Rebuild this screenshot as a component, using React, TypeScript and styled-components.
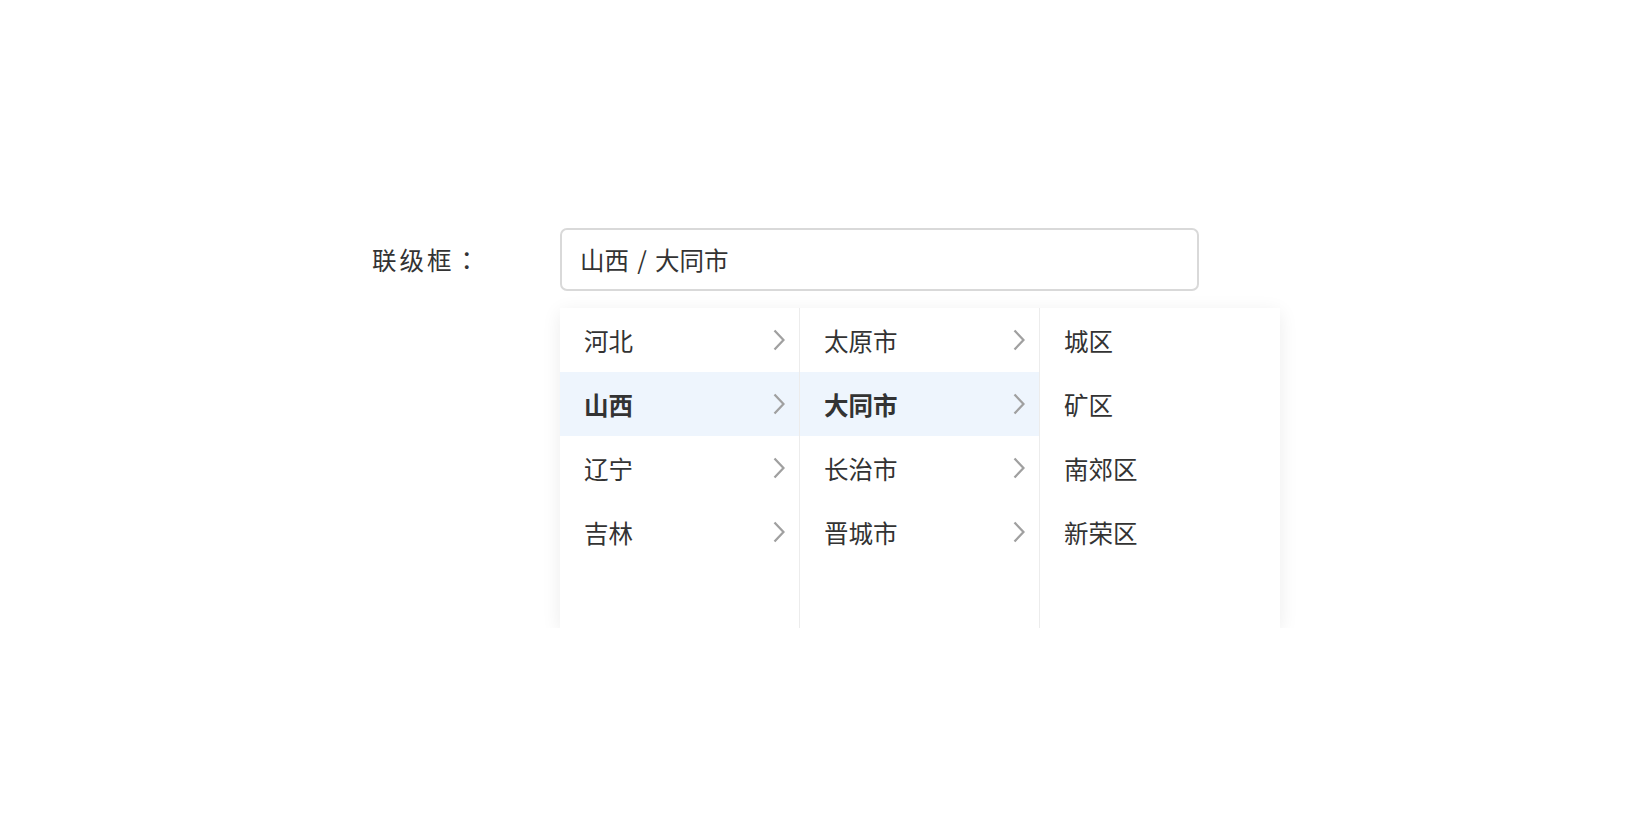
import styled, { createGlobalStyle } from "styled-components";

const GlobalStyle = createGlobalStyle`
  body {
    margin: 0;
    background: #ffffff;
    font-family: "Noto Sans CJK SC", "Noto Sans", sans-serif;
    color: #333333;
  }
`

const Page = styled.div`
  padding: 228px 0 0 372px;
  display: grid;
  grid-template-columns: 188px auto;
  grid-template-rows: 63px auto;
  row-gap: 17px;
`

const Label = styled.div`
  display: flex;
  align-items: center;
  font-size: 24.5px;
  letter-spacing: 3px;
  color: #333333;
`

// full-width colon drawn centred in its box, as in the reference
const Colon = styled.span`
  font-family: "Noto Sans CJK TC", "Noto Sans CJK SC", sans-serif;
`

const Field = styled.div`
  box-sizing: border-box;
  width: 639px;
  height: 63px;
  border: 2px solid #d9d9d9;
  border-radius: 7px;
  padding: 0 0 0 18px;
  display: flex;
  align-items: center;
  font-size: 24.5px;
  color: #333333;
  white-space: pre;
`

const Menu = styled.div`
  grid-column: 2;
  display: flex;
  width: 720px;
  background: #ffffff;
  box-shadow: 0 4px 18px rgba(0, 0, 0, 0.08);
`

const Column = styled.ul<{ $last?: boolean }>`
  box-sizing: border-box;
  width: 240px;
  height: 320px;
  margin: 0;
  padding: 0;
  list-style: none;
  border-right: ${(p) => (p.$last ? "none" : "1.5px solid #ececec")};
`

const Item = styled.li<{ $active?: boolean }>`
  height: 64px;
  display: flex;
  align-items: center;
  justify-content: space-between;
  padding: 0 14px 0 24px;
  font-size: 24.5px;
  font-weight: ${(p) => (p.$active ? 700 : 400)};
  color: #333333;
  background: ${(p) => (p.$active ? "#eef5fd" : "transparent")};
`

const Arrow = () => (
  <svg width="12" height="22" viewBox="0 0 12 22">
    <path d="M1.5 1.5 L10.5 11 L1.5 20.5" fill="none" stroke="#a0a0a0" strokeWidth="2.3" />
  </svg>
)

const provinces = ["河北", "山西", "辽宁", "吉林"]
const cities = ["太原市", "大同市", "长治市", "晋城市"]
const districts = ["城区", "矿区", "南郊区", "新荣区"]

const App = () => {
  return (
    <>
      <GlobalStyle />
      <Page>
        <Label>联级框<Colon>：</Colon></Label>
        <Field>山西{"\u2004/\u2004"}大同市</Field>
        <Menu>
          <Column>
            {provinces.map((name) => (
              <Item key={name} $active={name === "山西"}>
                {name}
                <Arrow />
              </Item>
            ))}
          </Column>
          <Column>
            {cities.map((name) => (
              <Item key={name} $active={name === "大同市"}>
                {name}
                <Arrow />
              </Item>
            ))}
          </Column>
          <Column $last>
            {districts.map((name) => (
              <Item key={name}>{name}</Item>
            ))}
          </Column>
        </Menu>
      </Page>
    </>
  )
}

export default App
